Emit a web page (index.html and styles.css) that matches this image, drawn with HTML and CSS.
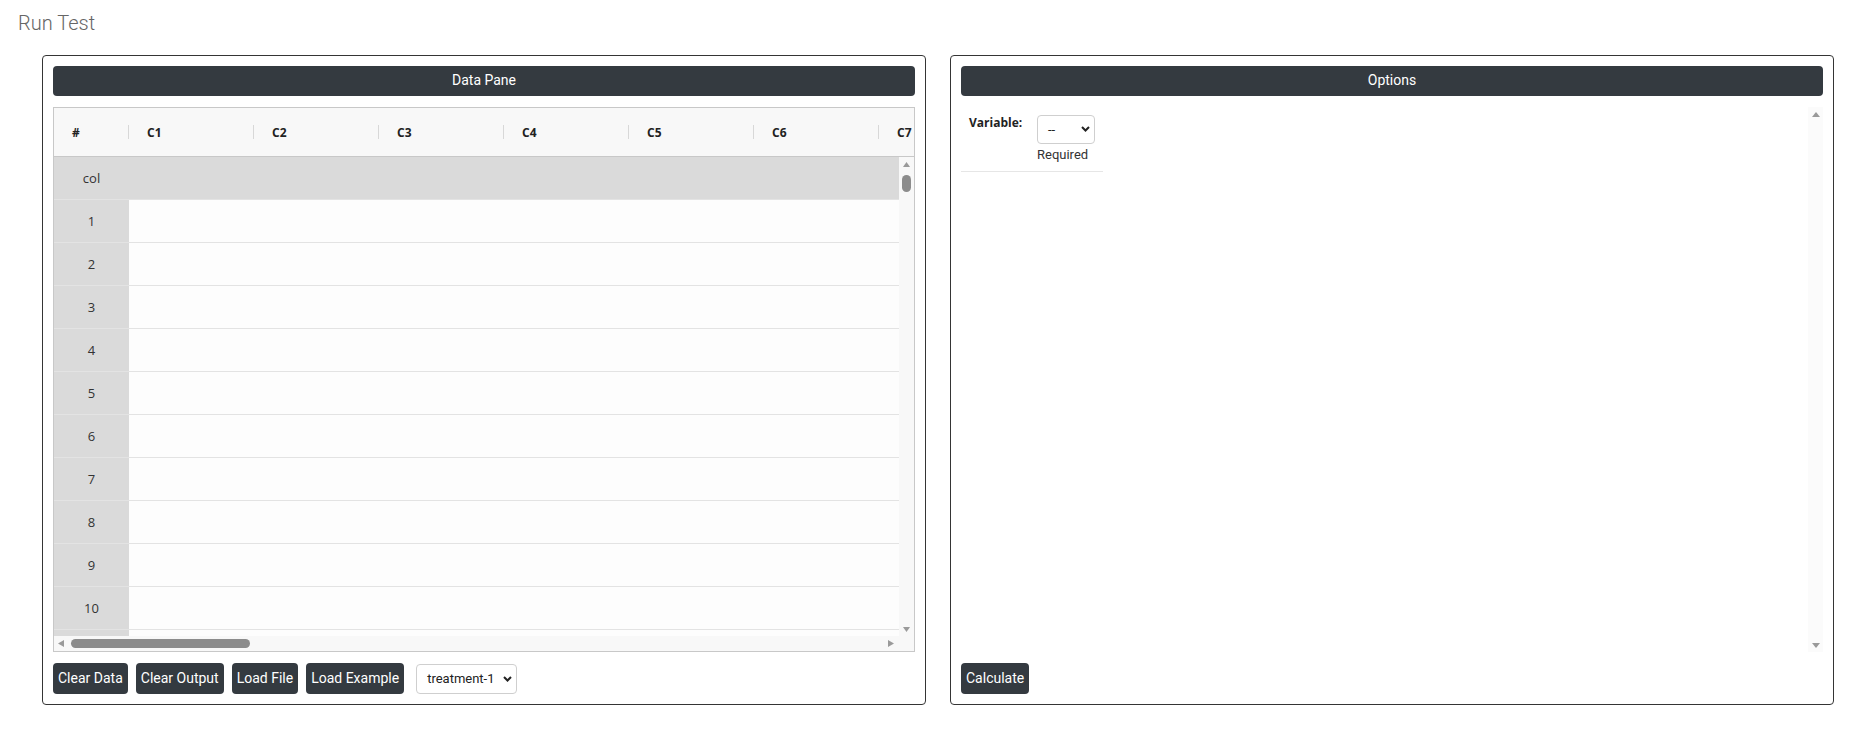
FILE: index.html
```html
<!DOCTYPE html>
<html lang="en">
<head>
<meta charset="utf-8">
<title>Run Test</title>
<link rel="stylesheet" href="styles.css">
</head>
<body>
<h1 class="page-title">Run Test</h1>
<div class="panels">
  <section class="panel">
    <div class="panel-bar">Data Pane</div>
    <div class="grid">
      <div class="grid-head">
        <div class="hcell hcell-idx"><span>#</span><i class="sep"></i></div>
        <div class="hcell"><span>C1</span><i class="sep"></i></div>
        <div class="hcell"><span>C2</span><i class="sep"></i></div>
        <div class="hcell"><span>C3</span><i class="sep"></i></div>
        <div class="hcell"><span>C4</span><i class="sep"></i></div>
        <div class="hcell"><span>C5</span><i class="sep"></i></div>
        <div class="hcell"><span>C6</span><i class="sep"></i></div>
        <div class="hcell"><span>C7</span><i class="sep"></i></div>
      </div>
      <div class="grid-body">
        <div class="rows">
          <div class="row row-names"><div class="rh">col</div><div class="cells"></div></div>
          <div class="row"><div class="rh">1</div><div class="cells"></div></div>
          <div class="row"><div class="rh">2</div><div class="cells"></div></div>
          <div class="row"><div class="rh">3</div><div class="cells"></div></div>
          <div class="row"><div class="rh">4</div><div class="cells"></div></div>
          <div class="row"><div class="rh">5</div><div class="cells"></div></div>
          <div class="row"><div class="rh">6</div><div class="cells"></div></div>
          <div class="row"><div class="rh">7</div><div class="cells"></div></div>
          <div class="row"><div class="rh">8</div><div class="cells"></div></div>
          <div class="row"><div class="rh">9</div><div class="cells"></div></div>
          <div class="row"><div class="rh">10</div><div class="cells"></div></div>
          <div class="row"><div class="rh"></div><div class="cells"></div></div>
        </div>
        <div class="vbar">
          <svg class="arrow" width="7" height="5" viewBox="0 0 7 5"><path d="M3.5 0 L7 5 L0 5 Z"/></svg>
          <div class="vthumb"></div>
          <div class="spacer"></div>
          <svg class="arrow" width="7" height="5" viewBox="0 0 7 5"><path d="M0 0 L7 0 L3.5 5 Z"/></svg>
        </div>
      </div>
      <div class="grid-foot">
        <div class="hbar">
          <svg class="arrow" width="6" height="7" viewBox="0 0 6 7"><path d="M6 0 L6 7 L0 3.5 Z"/></svg>
          <div class="hthumb"></div>
          <div class="spacer"></div>
          <svg class="arrow" width="6" height="7" viewBox="0 0 6 7"><path d="M0 0 L6 3.5 L0 7 Z"/></svg>
        </div>
        <div class="corner"></div>
      </div>
    </div>
    <div class="actions">
      <button class="btn">Clear Data</button>
      <button class="btn">Clear Output</button>
      <button class="btn">Load File</button>
      <button class="btn">Load Example</button>
      <div class="select select-example"><span>treatment-1</span><svg width="9" height="6" viewBox="0 0 9 6"><path d="M1 1 L4.5 4.5 L8 1" /></svg></div>
    </div>
  </section>

  <section class="panel">
    <div class="panel-bar">Options</div>
    <div class="options">
      <div class="options-content">
        <div class="opt-row">
          <div class="opt-label">Variable:</div>
          <div class="opt-field">
            <div class="select select-var"><span>--</span><svg width="9" height="6" viewBox="0 0 9 6"><path d="M1 1 L4.5 4.5 L8 1" /></svg></div>
            <div class="opt-hint">Required</div>
          </div>
        </div>
      </div>
      <div class="vbar vbar-light">
        <svg class="arrow" width="8" height="5" viewBox="0 0 8 5"><path d="M4 0 L8 5 L0 5 Z"/></svg>
        <div class="spacer"></div>
        <svg class="arrow" width="8" height="5" viewBox="0 0 8 5"><path d="M0 0 L8 0 L4 5 Z"/></svg>
      </div>
    </div>
    <div class="actions">
      <button class="btn">Calculate</button>
    </div>
  </section>
</div>
</body>
</html>
```

FILE: styles.css
```css
* { box-sizing: border-box; }

html, body {
  margin: 0;
  padding: 0;
  background: #ffffff;
  font-family: Roboto, "Liberation Sans", Arial, sans-serif;
  color: #333;
}

.page-title {
  margin: 0;
  padding: 11px 0 0 18px;
  font-size: 20px;
  line-height: 24px;
  font-weight: 300;
  color: #666;
}

.panels {
  display: flex;
  gap: 24px;
  padding-left: 42px;
  margin-top: 20px;
}

.panel {
  width: 884px;
  height: 650px;
  border: 1px solid #353535;
  border-radius: 4px;
  padding: 10px;
  display: flex;
  flex-direction: column;
}

.panel-bar {
  height: 30px;
  line-height: 29px;
  background: #343a40;
  color: #fff;
  border-radius: 4px;
  text-align: center;
  font-size: 14px;
  margin-bottom: 11px;
}

/* ---------- data grid ---------- */
.grid {
  height: 546px;
  border: 1px solid #c8c8c8;
  display: flex;
  flex-direction: column;
  overflow: hidden;
}

.grid-head {
  height: 49px;
  flex: none;
  display: flex;
  background: #f8f8f8;
  border-bottom: 1px solid #c8c8c8;
  overflow: hidden;
  font-family: "Open Sans", "DejaVu Sans", sans-serif;
  font-weight: 700;
  font-size: 12px;
  color: #222;
}

.hcell {
  flex: none;
  width: 125px;
  display: flex;
  align-items: center;
  justify-content: space-between;
  padding-left: 18px;
  padding-top: 1px;
}

.hcell-idx { width: 75px; }

.sep {
  width: 1px;
  height: 14px;
  background: #d8d8d8;
}

.grid-body {
  height: 479px;
  display: flex;
}

.rows {
  flex: 1;
  overflow: hidden;
  font-family: "Open Sans", "DejaVu Sans", sans-serif;
  font-size: 13px;
  color: #333;
}

.row {
  height: 43px;
  display: flex;
  border-bottom: 1px solid #e3e3e3;
}

.rh {
  width: 75px;
  flex: none;
  background: #dadada;
  display: flex;
  align-items: center;
  justify-content: center;
  padding-top: 1px;
}

.cells {
  flex: 1;
  background: #fdfdfd;
}

.row-names .cells { background: #dadada; }

.vbar {
  width: 15px;
  flex: none;
  background: #f8f8f8;
  display: flex;
  flex-direction: column;
  align-items: center;
  padding: 5px 0 4px;
}

.vbar-light {
  background: #fbfbfb;
  padding: 5px 0 4px;
}

.arrow { flex: none; display: block; fill: #9a9a9a; }

.vthumb {
  width: 9px;
  height: 17px;
  margin-top: 8px;
  border-radius: 5px;
  background: #8c8c8c;
}

.spacer { flex: 1; }

.grid-foot {
  height: 16px;
  flex: none;
  display: flex;
  background: #f8f8f8;
}

.hbar {
  flex: 1;
  display: flex;
  align-items: center;
  padding: 0 5px 0 4px;
}

.hthumb {
  width: 179px;
  height: 9px;
  margin-left: 7px;
  border-radius: 5px;
  background: #8c8c8c;
}

.corner { width: 15px; flex: none; }

/* ---------- actions ---------- */
.actions {
  margin-top: 11px;
  height: 31px;
  display: flex;
  align-items: center;
  gap: 8px;
}

.btn {
  height: 31px;
  padding: 0 5px;
  border: none;
  border-radius: 4px;
  background: #343a40;
  color: #fff;
  font-family: Roboto, "Liberation Sans", Arial, sans-serif;
  font-size: 14px;
  line-height: 31px;
  cursor: pointer;
}

.select {
  height: 30px;
  border: 1px solid #cfcfcf;
  border-radius: 4px;
  background: #fff;
  display: flex;
  align-items: center;
  justify-content: space-between;
  padding: 0 4px 0 10px;
  font-family: Roboto, "Liberation Sans", Arial, sans-serif;
  color: #222;
}

.select svg { fill: none; stroke: #222; stroke-width: 2; }

.select-example {
  width: 101px;
  margin-left: 4px;
  font-size: 13px;
}

.select-var {
  width: 58px;
  height: 29px;
  font-size: 13px;
}

/* ---------- options ---------- */
.options {
  height: 546px;
  display: flex;
}

.options-content { flex: 1; }

.opt-row {
  width: 142px;
  display: flex;
  padding: 8px 0 8px;
  border-bottom: 1px solid #e6e6e6;
}

.opt-label {
  width: 76px;
  padding-left: 8px;
  font-family: "Open Sans", "DejaVu Sans", sans-serif;
  font-weight: 700;
  font-size: 12px;
  line-height: 16px;
  color: #222;
}

.opt-hint {
  margin-top: 3px;
  font-size: 13px;
  line-height: 16px;
  color: #333;
}
```
